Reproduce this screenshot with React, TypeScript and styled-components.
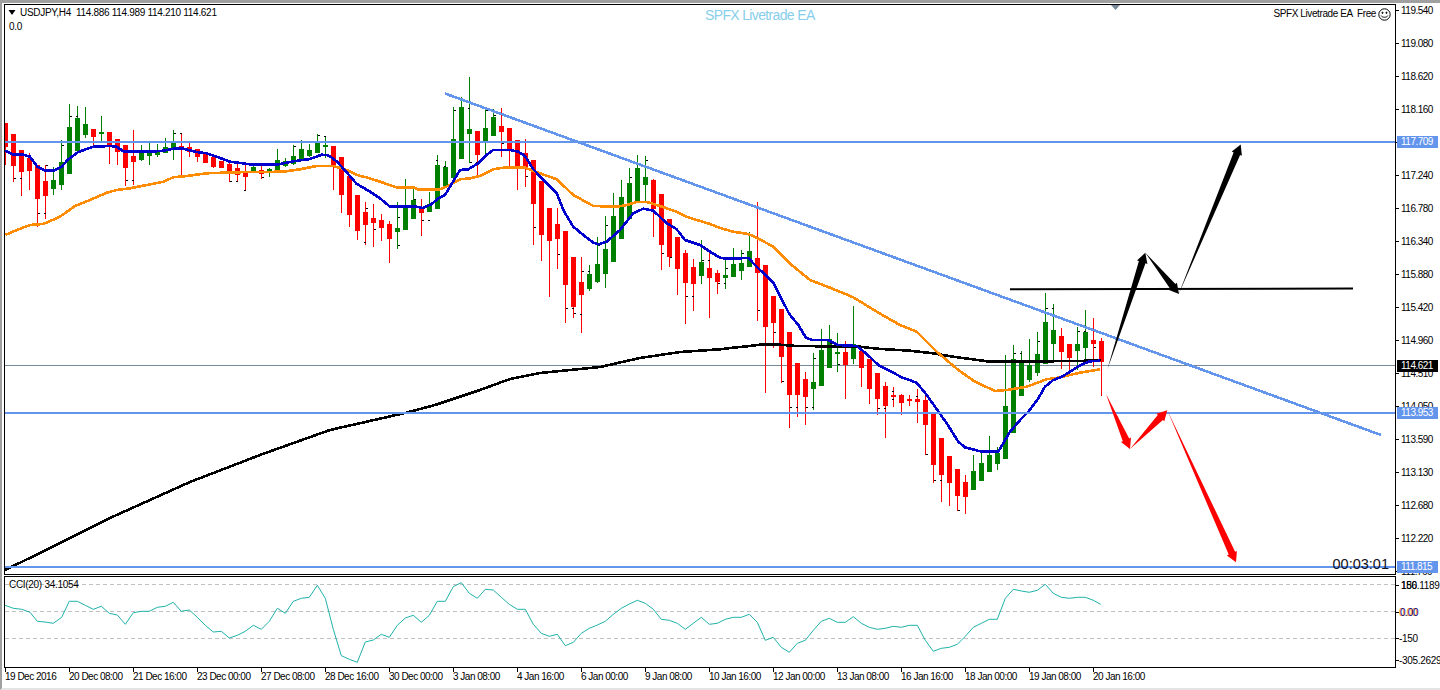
import styled, { createGlobalStyle } from 'styled-components';

const AXIS_FONT = `"Liberation Sans", Arial, sans-serif`;

type Pt = [number, number];

// all chart data was read off 3x crops, so it is written as crop coords + crop offset
const crop = (ox: number, oy: number, pts: number[]): Pt[] => {
  const out: Pt[] = [];
  for (let i = 0; i < pts.length; i += 2) out.push([ox + pts[i] / 3, oy + pts[i + 1] / 3]);
  return out;
};

const toPoints = (pts: Pt[]) => pts.map(([x, y]) => `${x.toFixed(1)},${y.toFixed(1)}`).join(' ');

// [wick top, body top, body bottom, wick bottom, 1 = up]
const candles3x: { oy: number; rows: number[][] }[] = [
  {
    oy: 0,
    rows: [
      [370, 370, 440, 495, 0], [402, 402, 498, 545, 0], [450, 450, 516, 588, 0], [460, 474, 513, 570, 0],
      [495, 495, 597, 680, 0], [495, 543, 588, 657, 0], [500, 540, 567, 585, 1], [420, 486, 555, 570, 1],
      [312, 381, 522, 522, 1], [318, 353, 453, 460, 1], [321, 372, 405, 415, 1], [387, 387, 411, 440, 0],
      [348, 396, 402, 425, 1], [396, 396, 438, 492, 0], [418, 418, 456, 495, 0], [435, 435, 504, 558, 0],
      [390, 468, 486, 555, 0], [435, 459, 480, 483, 1], [430, 456, 468, 495, 1], [432, 450, 465, 470, 1],
      [415, 440, 458, 460, 1], [390, 429, 450, 480, 1], [400, 438, 450, 525, 0], [430, 441, 456, 470, 0],
      [447, 447, 471, 485, 0], [455, 456, 489, 490, 0], [470, 471, 501, 505, 0], [483, 483, 504, 505, 0],
      [490, 491, 516, 545, 0], [490, 504, 525, 545, 0], [490, 513, 531, 572, 0], [490, 501, 516, 520, 1],
      [495, 510, 522, 537, 0], [505, 507, 516, 530, 1], [447, 480, 513, 515, 1], [475, 483, 498, 500, 1],
      [435, 468, 492, 495, 1], [420, 447, 480, 482, 1], [432, 450, 468, 470, 1], [402, 429, 459, 460, 1],
      [408, 435, 441, 475, 1], [438, 438, 495, 570, 0], [471, 471, 585, 640, 0], [528, 528, 645, 680, 0],
      [585, 585, 693, 720, 0],
    ],
  },
  {
    oy: 70,
    rows: [
      [395, 426, 465, 525, 0], [402, 444, 459, 530, 0], [432, 450, 474, 512, 0], [453, 462, 507, 578, 0],
      [397, 474, 486, 537, 1], [327, 414, 480, 480, 1], [348, 390, 447, 447, 1], [388, 417, 429, 497, 0],
      [365, 402, 426, 426, 1], [255, 285, 417, 417, 1], [273, 291, 351, 351, 1], [111, 207, 324, 324, 1],
      [80, 111, 267, 267, 1], [22, 177, 192, 280, 1], [183, 183, 255, 315, 0], [115, 174, 213, 255, 1],
      [118, 141, 198, 198, 1], [114, 168, 186, 260, 0], [174, 174, 243, 290, 0], [210, 210, 292, 360, 0],
      [207, 249, 294, 350, 0], [270, 270, 402, 525, 0], [333, 333, 495, 572, 0], [414, 414, 513, 680, 0],
      [414, 462, 507, 597, 0], [483, 483, 645, 758, 0], [561, 561, 711, 743, 0], [560, 636, 675, 790, 0],
      [585, 612, 657, 662, 1], [500, 582, 636, 640, 1], [438, 537, 612, 653, 1], [369, 438, 576, 576, 1],
      [330, 381, 507, 507, 1], [295, 339, 447, 447, 1], [255, 294, 393, 393, 1], [258, 321, 345, 392, 1],
      [328, 330, 417, 500, 0], [372, 372, 525, 600, 0], [447, 447, 561, 590, 0], [501, 501, 597, 675, 0],
      [540, 549, 639, 762, 0], [567, 591, 642, 723, 0], [510, 576, 618, 642, 1], [547, 594, 624, 743, 0],
      [600, 609, 636, 672, 0],
    ],
  },
  {
    oy: 190,
    rows: [
      [205, 255, 264, 298, 1], [174, 222, 261, 261, 1], [180, 219, 243, 270, 1], [126, 183, 231, 231, 1],
      [36, 204, 249, 392, 0], [225, 225, 411, 608, 0], [318, 318, 399, 474, 0], [357, 357, 501, 578, 0],
      [426, 426, 615, 714, 0], [519, 519, 615, 680, 0], [546, 567, 621, 705, 0], [488, 576, 597, 660, 1],
      [417, 480, 588, 588, 1], [405, 447, 534, 534, 1], [430, 486, 492, 546, 1], [452, 486, 525, 627, 0],
      [348, 462, 507, 522, 1], [480, 483, 534, 592, 0], [507, 507, 597, 642, 0], [549, 549, 627, 675, 0],
      [576, 588, 648, 743, 0], [592, 615, 621, 650, 0], [612, 615, 639, 675, 0], [615, 627, 630, 648, 0],
      [597, 627, 636, 698, 0], [610, 630, 705, 795, 0], [670, 672, 825, 878, 0], [744, 744, 855, 935, 0],
      [798, 798, 879, 948, 0], [837, 837, 918, 962, 0], [855, 876, 921, 971, 0], [795, 843, 900, 900, 1],
      [783, 819, 873, 873, 1], [738, 795, 846, 846, 1], [770, 789, 822, 840, 1], [495, 648, 807, 807, 1],
      [465, 507, 729, 729, 1], [483, 516, 618, 618, 1], [447, 525, 570, 576, 1], [426, 492, 549, 558, 1],
      [309, 396, 522, 522, 1], [342, 420, 462, 510, 1], [414, 438, 486, 537, 0], [462, 462, 504, 545, 0],
      [411, 462, 483, 540, 1],
    ],
  },
  { oy: 130, rows: [[540, 606, 654, 700, 1], [565, 630, 642, 712, 0], [625, 633, 696, 798, 0]] },
];

const candles = candles3x.flatMap(({ oy, rows }) =>
  rows.map(([wt, bt, bb, wb, up]) => ({
    wickTop: Math.round(oy + wt / 3),
    bodyTop: Math.round(oy + bt / 3),
    bodyBottom: Math.round(oy + bb / 3),
    wickBottom: Math.round(oy + wb / 3),
    up: up === 1,
  })),
);

const fastMa: Pt[] = [
  ...crop(0, 0, [16, 452, 40, 464, 70, 464, 90, 470, 112, 500, 135, 512, 160, 512, 185, 500, 205, 478, 235, 456, 280, 440, 330, 438, 350, 440, 372, 455, 450, 455, 490, 452, 520, 446, 550, 446, 590, 456, 620, 460, 650, 470, 690, 485, 760, 494, 830, 494, 880, 484, 930, 477, 965, 464, 985, 466, 1010, 484, 1040, 517, 1070, 552]),
  ...crop(360, 70, [0, 347, 30, 365, 60, 385, 90, 410, 170, 410, 190, 414, 215, 402, 235, 385, 255, 375, 285, 325, 300, 300, 325, 298, 355, 280, 380, 255, 400, 240, 450, 240, 475, 245, 495, 258, 520, 298, 560, 340, 590, 370, 610, 420, 640, 470, 670, 495, 700, 518, 715, 523, 740, 515, 780, 480, 820, 430, 850, 416, 880, 422, 920, 460, 950, 478, 975, 510, 1020, 525, 1050, 545, 1080, 563]),
  ...crop(720, 190, [20, 206, 85, 204, 110, 230, 160, 278, 208, 372, 235, 405, 257, 442, 275, 450, 325, 450, 355, 465, 410, 468, 440, 492, 475, 525, 520, 548, 545, 562, 590, 578, 620, 615, 680, 700, 715, 755, 735, 772, 785, 785, 835, 785, 870, 725, 905, 685, 925, 665, 955, 625, 975, 590, 1000, 570, 1030, 558, 1080, 526]),
  ...crop(1000, 130, [270, 694, 300, 692]),
];

const slowMa: Pt[] = [
  ...crop(0, 0, [16, 705, 50, 690, 90, 675, 130, 672, 180, 650, 225, 618, 270, 600, 320, 578, 350, 570, 390, 565, 440, 555, 490, 545, 520, 532, 560, 528, 620, 520, 700, 517, 850, 515, 900, 508, 950, 498, 1000, 498, 1040, 510, 1070, 524]),
  ...crop(360, 70, [0, 318, 20, 322, 60, 335, 110, 352, 160, 352, 175, 359, 240, 358, 270, 345, 300, 328, 330, 325, 360, 318, 400, 298, 430, 293, 495, 293, 540, 310, 590, 328, 640, 375, 700, 408, 770, 410, 800, 405, 830, 396, 860, 396, 900, 408, 950, 425, 980, 440, 1010, 450, 1050, 462, 1080, 474]),
  ...crop(720, 190, [40, 125, 85, 132, 110, 143, 160, 170, 215, 225, 270, 270, 330, 293, 400, 322, 470, 365, 540, 405, 590, 425, 650, 485, 715, 540, 765, 575, 825, 603, 860, 600, 920, 590, 980, 568, 1010, 564, 1080, 548]),
  ...crop(1000, 130, [300, 718]),
];

const longMa: Pt[] = [
  [5, 570], [40, 553], [110, 518], [190, 482], [260, 455], [330, 430], [405, 413], [435, 405], [480, 390], [510, 379],
  [540, 373], [600, 367], [640, 358], [680, 352],
  ...crop(720, 190, [0, 478, 40, 473, 90, 468, 120, 464, 180, 464, 230, 468, 420, 470, 470, 476, 570, 482, 640, 490, 700, 500, 810, 515, 1080, 513]),
  [1101, 360],
];

const ticks: Pt[] = [
  ...crop(0, 0, [40, 535, 58, 535, 112, 640, 130, 640, 136, 495, 184, 435, 208, 347, 226, 347, 376, 541, 394, 541, 520, 400, 538, 400, 688, 543, 706, 543, 730, 570, 784, 530, 800, 512, 880, 437, 952, 405, 970, 408]),
  ...crop(360, 70, [8, 515, 16, 415, 40, 478, 112, 440, 112, 525, 136, 405, 160, 388, 184, 450, 202, 450, 226, 270, 250, 288, 280, 120, 322, 115, 328, 277, 346, 277, 376, 120, 400, 135, 424, 220, 496, 318, 520, 470, 592, 552, 616, 715, 634, 715, 640, 730, 658, 733, 664, 604, 682, 604, 712, 525, 736, 465, 808, 322, 856, 270, 904, 550, 928, 560, 976, 678, 994, 678, 1024, 570, 1042, 570, 1072, 640]),
  ...crop(720, 190, [16, 235, 10, 280, 64, 190, 112, 360, 160, 427, 184, 573, 208, 651, 226, 651, 256, 651, 274, 651, 280, 505, 328, 460, 352, 522, 472, 654, 490, 654, 514, 604, 514, 628, 586, 618, 616, 793, 640, 871, 658, 871, 712, 961, 784, 783, 808, 783, 880, 490, 976, 355, 994, 355]),
  ...crop(1000, 130, [136, 535, 152, 535, 112, 634, 40, 670, 58, 670, 232, 602, 250, 602, 280, 650]),
];

const cciLine: Pt[] = [
  ...crop(0, 560, [15, 136, 40, 145, 65, 148, 90, 157, 112, 184, 135, 186, 160, 190, 185, 172, 208, 124, 232, 124, 256, 136, 280, 148, 304, 139, 328, 160, 352, 165, 376, 193, 400, 158, 424, 154, 448, 154, 472, 142, 496, 139, 520, 127, 544, 154, 568, 150, 592, 172, 616, 196, 640, 216, 664, 214, 688, 234, 712, 226, 736, 214, 760, 196, 784, 208, 808, 184, 832, 145, 856, 160, 880, 124, 904, 115, 928, 112, 952, 76, 976, 115, 1000, 208, 1024, 287, 1048, 298, 1072, 307, 1096, 246, 1120, 240, 1144, 223, 1168, 232, 1192, 196]),
  ...crop(400, 560, [16, 174, 40, 166, 64, 187, 88, 166, 112, 124, 136, 124, 160, 80, 184, 68, 208, 100, 232, 115, 256, 88, 280, 90, 304, 112, 328, 133, 352, 148, 376, 148, 400, 193, 424, 220, 448, 229, 472, 223, 496, 257, 520, 247, 544, 220, 568, 205, 592, 195, 616, 184, 640, 163, 664, 145, 688, 132, 712, 121, 736, 130, 760, 148, 784, 178, 808, 181, 832, 190, 856, 208, 880, 190, 904, 172, 928, 193, 952, 190, 976, 178, 1000, 172, 1024, 172, 1048, 163, 1072, 187, 1096, 241, 1120, 232, 1144, 262, 1168, 277, 1192, 250]),
  ...crop(800, 560, [16, 241, 40, 211, 64, 184, 88, 175, 112, 187, 136, 187, 160, 170, 184, 190, 208, 202, 232, 208, 256, 205, 280, 199, 304, 202, 328, 196, 352, 196, 376, 241, 400, 274, 424, 265, 448, 262, 472, 253, 496, 229, 520, 202, 544, 190, 568, 178, 592, 178, 616, 115, 640, 88, 664, 93, 688, 97, 712, 91, 736, 73, 760, 100, 784, 112, 808, 115, 832, 112, 856, 112, 880, 121, 902, 133]),
];

// tapered MT4 drawn arrow: needle at the tail, wide shaft and a small head at the tip
const arrowShape = (x1: number, y1: number, x2: number, y2: number, shaft = 7, head = 11, headLen = 10) => {
  const len = Math.hypot(x2 - x1, y2 - y1);
  const ux = (x2 - x1) / len;
  const uy = (y2 - y1) / len;
  const nx = -uy;
  const ny = ux;
  const bx = x2 - ux * headLen;
  const by = y2 - uy * headLen;
  const pts: Pt[] = [
    [x1, y1],
    [bx + (nx * shaft) / 2, by + (ny * shaft) / 2],
    [bx + (nx * head) / 2, by + (ny * head) / 2],
    [x2, y2],
    [bx - (nx * head) / 2, by - (ny * head) / 2],
    [bx - (nx * shaft) / 2, by - (ny * shaft) / 2],
  ];
  return toPoints(pts);
};

const blackArrows = [
  arrowShape(1107.3, 369.5, 1145.3, 252.7),
  arrowShape(1145.3, 252.7, 1179, 294),
  arrowShape(1178.7, 294, 1240.7, 144.5),
];

const redArrows = [
  arrowShape(1106, 394, 1130, 449),
  arrowShape(1130, 449, 1167.3, 410.3),
  arrowShape(1167.3, 410.3, 1236, 562.3),
];

const priceScale = [
  '119.540', '119.080', '118.620', '118.160', '117.700', '117.240', '116.780', '116.340', '115.880', '115.420',
  '114.960', '114.510', '114.050', '113.590', '113.130', '112.680', '112.220', '111.760',
];

const priceTags = [
  { price: '117.709', top: 132, bg: '#6495ed' },
  { price: '114.621', top: 356, bg: '#000' },
  { price: '113.953', top: 403, bg: '#6495ed' },
  { price: '111.815', top: 557, bg: '#6495ed' },
];

const timeScale = [
  '19 Dec 2016', '20 Dec 08:00', '21 Dec 16:00', '23 Dec 00:00', '27 Dec 08:00', '28 Dec 16:00', '30 Dec 00:00',
  '3 Jan 08:00', '4 Jan 16:00', '6 Jan 00:00', '9 Jan 08:00', '10 Jan 16:00', '12 Jan 00:00', '13 Jan 08:00',
  '16 Jan 16:00', '18 Jan 00:00', '19 Jan 08:00', '20 Jan 16:00',
];

const GlobalStyle = createGlobalStyle`
  html, body {
    margin: 0;
    padding: 0;
    background: #fff;
    overflow: hidden;
  }
`;

const Terminal = styled.div`
  box-sizing: border-box;
  width: 1440px;
  height: 690px;
  padding: 1px 0 0 2px;
  background: #fff;
  border-top: 3px solid #a0a0a0;
  border-left: 2px solid #a0a0a0;
  border-bottom: 2px solid #e4e4e4;
  display: grid;
  grid-template-columns: 1392px 1fr;
  grid-template-rows: 571px 92px 1fr;
  row-gap: 1px;
  align-content: start;
  font-family: ${AXIS_FONT};
  font-size: 10px;
  letter-spacing: -0.3px;
  color: #000;
  overflow: hidden;
`;

// picture and text overlay share the one grid cell of the pane
const Pane = styled.div`
  box-sizing: border-box;
  border: 1px solid #000;
  overflow: hidden;
  display: grid;
  grid-template: 1fr / 1fr;
  min-height: 0;

  > * {
    grid-area: 1 / 1;
  }

  svg {
    display: block;
  }
`;

const Overlay = styled.div`
  display: flex;
  flex-direction: column;
  justify-content: space-between;
  align-items: stretch;
  padding: 1px 4px 2px 0;
`;

const TopBar = styled.div`
  display: flex;
  align-items: flex-start;
  justify-content: space-between;
`;

const LegendBlock = styled.div`
  width: 700px;
  display: flex;
  flex-direction: column;
  gap: 1px;
`;

const LegendRow = styled.div<{ $indent: number }>`
  display: flex;
  align-items: center;
  gap: 2px;
  padding-left: ${({ $indent }) => $indent}px;
  line-height: 13px;
  white-space: pre;
`;

const WatermarkTitle = styled.div`
  flex: 1;
  margin-top: 1px;
  font: 14px/17px 'Liberation Sans', Arial, sans-serif;
  letter-spacing: -0.65px;
  color: #87ceeb;
`;

const EaBadge = styled.div`
  display: flex;
  align-items: center;
  gap: 2px;
  margin-top: 1px;
  line-height: 14px;
  letter-spacing: -0.4px;
  white-space: pre;
`;

const Countdown = styled.div`
  align-self: flex-end;
  margin-right: 2px;
  font: 14.5px/16px 'Liberation Sans', Arial, sans-serif;
  letter-spacing: 0;
  color: #101020;
`;

const PriceAxis = styled.div`
  position: relative;
  overflow: hidden;
  height: 571px;
  letter-spacing: -0.5px;
`;

const ScaleRow = styled.div<{ $height?: number; $gap?: number }>`
  display: flex;
  align-items: flex-start;
  gap: ${({ $gap }) => $gap ?? 2}px;
  height: ${({ $height }) => $height ?? 33}px;
  line-height: 13px;
  white-space: nowrap;

  &::before {
    content: '';
    flex: none;
    width: 3px;
    height: 1px;
    margin-top: 6px;
    background: #000;
  }
`;

const PriceTag = styled.div<{ $top: number; $bg: string }>`
  position: absolute;
  top: ${({ $top }) => $top}px;
  left: 1px;
  width: 41px;
  height: 12px;
  padding-left: 4px;
  box-sizing: border-box;
  line-height: 12px;
  color: #fff;
  background: ${({ $bg }) => $bg};
`;

const SubAxis = styled.div`
  overflow: hidden;
  padding-top: 3px;
`;

const StackedLabels = styled.span`
  display: inline-grid;

  > * {
    grid-area: 1 / 1;
  }
`;

const OrangeZero = styled.span`
  color: #ff8c00;
`;

const NavyZero = styled.span`
  margin-left: 1px;
  color: #000080;
`;

const TimeAxis = styled.div`
  grid-column: 1 / -1;
  display: flex;
  padding-left: 1px;
  margin-top: -1px;
  letter-spacing: -0.5px;
`;

const TimeCell = styled.div`
  flex: none;
  width: 64px;
  height: 16px;
  box-sizing: border-box;
  padding-top: 2px;
  background: linear-gradient(#000, #000) left top / 1px 4px no-repeat;
  line-height: 13px;
  white-space: nowrap;
`;

const Smiley = () => (
  <svg width="13" height="13" viewBox="0 0 13 13" fill="none" stroke="#000" strokeWidth="1">
    <circle cx="6.5" cy="6.5" r="5.7" />
    <circle cx="4.5" cy="4.8" r="0.6" fill="#000" />
    <circle cx="8.5" cy="4.8" r="0.6" fill="#000" />
    <path d="M3.2 7.6c.8 2.2 5.8 2.2 6.6 0" />
  </svg>
);

const MainChart = () => (
  <svg width="1390" height="569" viewBox="5 5 1390 569">
    <g shapeRendering="crispEdges">
      <line x1="5" x2="1395" y1="365.5" y2="365.5" stroke="#778899" strokeWidth="1" />
      {candles.map((c, i) => {
        const col = 5 + 8 * i;
        const color = c.up ? '#008000' : '#ff0000';
        return (
          <g key={i} fill={color}>
            <rect x={col} y={c.wickTop} width="1" height={Math.max(c.wickBottom - c.wickTop, 1)} />
            <rect x={col - 2} y={c.bodyTop} width="5" height={Math.max(c.bodyBottom - c.bodyTop, 2)} />
          </g>
        );
      })}
      {ticks.map(([x, y], i) => (
        <rect key={i} x={Math.round(x) + 1} y={Math.round(y)} width="2" height="1" fill="#000" />
      ))}
      <polyline points={toPoints(longMa)} fill="none" stroke="#000" strokeWidth="2.6" />
      <polyline points={toPoints(slowMa)} fill="none" stroke="#ff8c00" strokeWidth="2.6" />
      <polyline points={toPoints(fastMa)} fill="none" stroke="#0000cd" strokeWidth="2.6" />
      <line x1="5" x2="1395" y1="142" y2="142" stroke="#6495ed" strokeWidth="2" />
      <line x1="5" x2="1395" y1="413" y2="413" stroke="#6495ed" strokeWidth="2" />
      <line x1="5" x2="1395" y1="567" y2="567" stroke="#6495ed" strokeWidth="2" />
      <line x1="445" y1="93.5" x2="1381" y2="435" stroke="#6495ed" strokeWidth="2.6" />
    </g>
    <line x1="1010" y1="289.3" x2="1353" y2="288.5" stroke="#000" strokeWidth="2" />
    {blackArrows.map((p, i) => (
      <polygon key={i} points={p} fill="#000" />
    ))}
    {redArrows.map((p, i) => (
      <polygon key={i} points={p} fill="#ff0000" />
    ))}
    <polygon points="1111,5 1120,5 1115.5,10" fill="#778899" />
  </svg>
);

const CciChart = () => (
  <svg width="1390" height="90" viewBox="5 577 1390 90">
    <g shapeRendering="crispEdges" stroke="#c0c0c0" strokeDasharray="4 3">
      <line x1="5" x2="1395" y1="584.5" y2="584.5" />
      <line x1="5" x2="1395" y1="611.5" y2="611.5" />
      <line x1="5" x2="1395" y1="638.5" y2="638.5" />
    </g>
    <polyline points={toPoints(cciLine)} fill="none" stroke="#20b2aa" strokeWidth="1" />
  </svg>
);

const App = () => (
  <>
    <GlobalStyle />
    <Terminal>
      <Pane>
        <MainChart />
        <Overlay>
          <TopBar>
            <LegendBlock>
              <LegendRow $indent={3}>
                <svg width="10" height="6" viewBox="0 0 10 6">
                  <polygon points="0.5,0 7.5,0 4,5" fill="#000" />
                </svg>
                <span>USDJPY,H4  114.886 114.989 114.210 114.621</span>
              </LegendRow>
              <LegendRow $indent={4}>0.0</LegendRow>
            </LegendBlock>
            <WatermarkTitle>SPFX Livetrade EA</WatermarkTitle>
            <EaBadge>
              <span>SPFX Livetrade EA  Free</span>
              <Smiley />
            </EaBadge>
          </TopBar>
          <Countdown>00:03:01</Countdown>
        </Overlay>
      </Pane>
      <PriceAxis>
        {priceScale.map((p) => (
          <ScaleRow key={p}>{p}</ScaleRow>
        ))}
        {priceTags.map((t) => (
          <PriceTag key={t.price} $top={t.top} $bg={t.bg}>
            {t.price}
          </PriceTag>
        ))}
      </PriceAxis>
      <Pane>
        <CciChart />
        <Overlay>
          <LegendRow $indent={4}>
            <span>CCI(20) 34.1054</span>
          </LegendRow>
        </Overlay>
      </Pane>
      <SubAxis>
        <ScaleRow $height={27}>
          <StackedLabels>
            <span>186.1189</span>
            <span>150</span>
          </StackedLabels>
        </ScaleRow>
        <ScaleRow $height={26} $gap={0}>
          <StackedLabels>
            <OrangeZero>0.00</OrangeZero>
            <NavyZero>0.00</NavyZero>
          </StackedLabels>
        </ScaleRow>
        <ScaleRow $height={22} $gap={0}>-150</ScaleRow>
        <ScaleRow $height={13} $gap={0}>-305.2629</ScaleRow>
      </SubAxis>
      <TimeAxis>
        {timeScale.map((t) => (
          <TimeCell key={t}>{t}</TimeCell>
        ))}
      </TimeAxis>
    </Terminal>
  </>
);

export default App;
